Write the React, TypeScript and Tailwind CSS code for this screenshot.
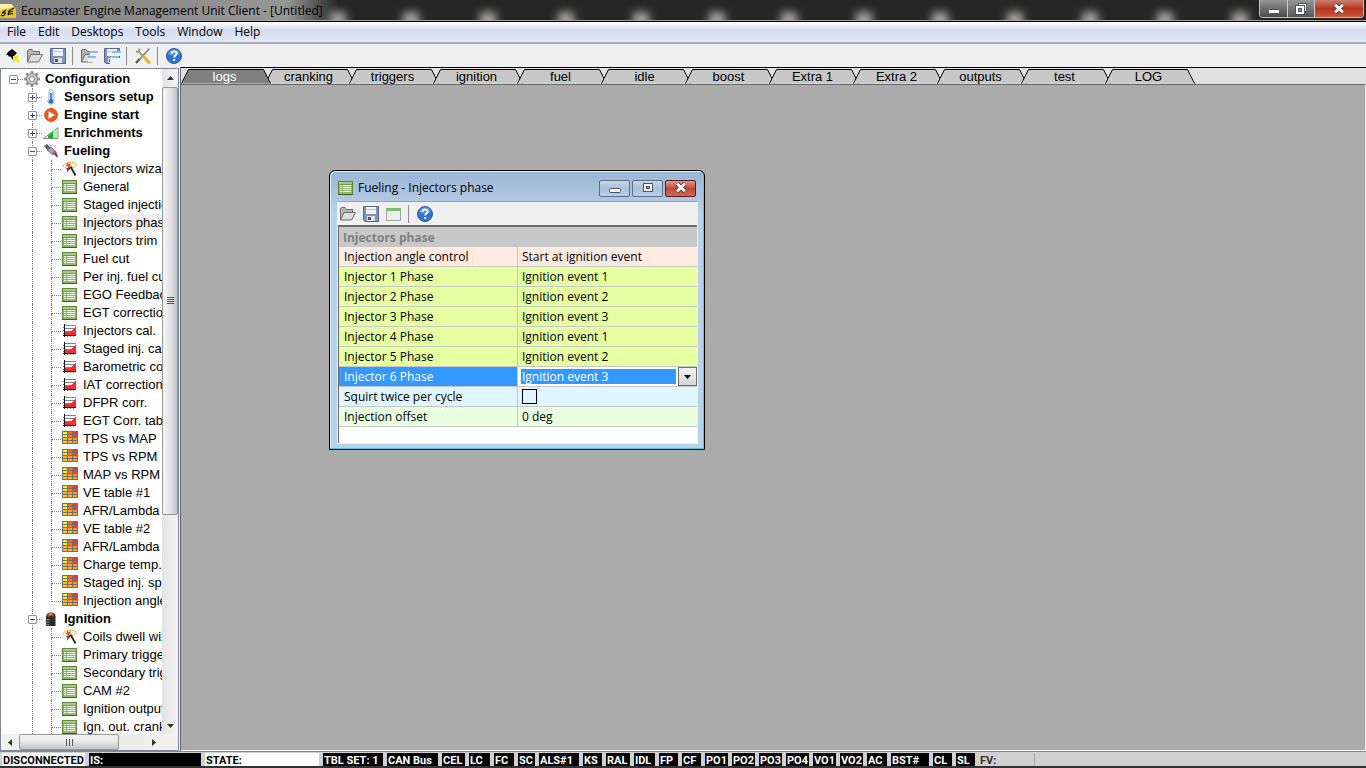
import { useState } from "react";
import type { ReactNode } from "react";
import clsx from "clsx";

type IconName = "sheet" | "wand" | "curve" | "map";

interface TreeItem {
    label: string;
    level: 0 | 1 | 2;
    icon: ReactNode;
    expanded?: boolean;
    last?: boolean;
    selected?: boolean;
}

/* ---------- Icons ---------- */

const SheetIcon = () => (
    <svg width="16" height="16" viewBox="0 0 16 16" shapeRendering="crispEdges">
        <rect x="0.5" y="1.5" width="14" height="13" fill="#8fb868" stroke="#5d8838" />
        <rect x="1" y="2" width="13" height="2" fill="#a9c98a" />
        <rect x="1" y="4" width="13" height="1" fill="#6f9a48" />
        {[5, 7, 9, 11].map((y) => (
            <g key={y}>
                <rect x="2" y={y} width="2" height="1" fill="#f4faee" />
                <rect x="5" y={y} width="8" height="1" fill="#f4faee" />
            </g>
        ))}
        <rect x="0" y="14" width="15" height="1" fill="#3c6413" />
    </svg>
);

const WandIcon = () => (
    <svg width="16" height="16" viewBox="0 0 16 16" fill="none">
        <path d="M1 5C2 2 9 0 13 2.200C16 4.500 13 6.500 9 6.800" stroke="#f0a830" />
        <path d="M1 5C1.500 6.500 3.500 7 5 7" stroke="#f7ca60" />
        <path d="M8.500 5.500L13.500 14.500" stroke="#2c2424" strokeWidth="1.800" />
        <path d="M7.500 6L9 7 6.500 9.500 4.500 12 5.500 8.500 3.500 8z" fill="#4a3028" />
        <path d="M5 1l1.500 2L9 2 8 4.200 10 6 7.500 5.800 6.500 8 5.500 5.500 3 5l2-1.500z" fill="#d85a34" />
    </svg>
);

const CurveIcon = () => (
    <svg width="16" height="16" viewBox="0 0 16 16" shapeRendering="crispEdges">
        <rect x="2" y="2" width="12" height="1" fill="#7487a0" />
        <rect x="2" y="5" width="12" height="1" fill="#7487a0" />
        <rect x="2" y="8" width="9" height="1" fill="#7487a0" />
        <path d="M3 12V9h3l3-1 2-2 2-2 1-1v9z" fill="#f92c2c" />
        <rect x="2" y="1" width="1" height="13" fill="#111" />
        <rect x="1" y="12" width="13" height="1" fill="#111" />
        {[5, 8, 11].map((x) => <rect key={x} x={x} y="13" width="1" height="1" fill="#777" />)}
        {[4, 7, 10].map((y) => <rect key={y} x="1" y={y} width="1" height="1" fill="#777" />)}
    </svg>
);

const mapColors = [
    ["#dcff28", "#ff6420", "#ff2c2c"],
    ["#e8f028", "#ff7820", "#ff3c2c"],
    ["#ffb020", "#ffa030", "#ff9030"],
    ["#ffc020", "#ffb020", "#ffa020"],
];

const MapIcon = () => (
    <svg width="16" height="16" viewBox="0 0 16 16" shapeRendering="crispEdges">
        <rect y="0" width="16" height="13" fill="#76706a" />
        {mapColors.map((row, y) =>
            row.map((fill, x) => <rect key={`${x}-${y}`} x={1 + x * 5} y={1 + y * 3} width="4" height="2" fill={fill} />)
        )}
    </svg>
);

const GearIcon = () => (
    <svg width="16" height="16" viewBox="0 0 16 16">
        {[0, 45, 90, 135].map((a) => (
            <rect key={a} x="6.500" y="0" width="3" height="16" rx="1" fill="#8c8c8c" transform={`rotate(${a} 8 8)`} />
        ))}
        <circle cx="8" cy="8" r="5.500" fill="#c4c4c4" stroke="#8e8e8e" />
        <circle cx="8" cy="8" r="2.600" fill="#fff" stroke="#8e8e8e" />
    </svg>
);

const ThermometerIcon = () => (
    <svg width="16" height="16" viewBox="0 0 16 16">
        <path d="M6 2.500a2 2 0 0 1 4 0V10a3 3 0 1 1-4 0z" fill="#e4f1fa" stroke="#8fb4d0" />
        <path d="M8 4v8" stroke="#2778b8" strokeWidth="1.600" />
        <circle cx="8" cy="12.500" r="2.200" fill="#2778b8" />
        <path d="M10.500 4h1.500M10.500 6h1.500M10.500 8h1.500" stroke="#a9bccb" />
    </svg>
);

const StartIcon = () => (
    <svg width="16" height="16" viewBox="0 0 16 16">
        <circle cx="8" cy="8" r="6.400" fill="#ee5a1c" stroke="#d9460e" />
        <path d="M5.500 4.200L12 8l-6.500 3.800z" fill="#fff" />
    </svg>
);

const RampIcon = () => (
    <svg width="16" height="16" viewBox="0 0 16 16">
        <path d="M.5 13.500L15 2.500v11z" fill="#f2faf0" stroke="#74907a" />
        <path d="M5 10.500l5.500-4.200V13H5z" fill="#19b32c" />
        <path d="M10.500 6.300L14.500 3.500V13h-4z" fill="#b4e8b4" />
    </svg>
);

const InjectorIcon = () => (
    <svg width="16" height="16" viewBox="0 0 16 16">
        <path d="M1 3l3-2 4 4-3 3z" fill="#5b606e" />
        <path d="M4 7l4-3 5 5-3 3z" fill="#a8a4b4" stroke="#62606e" strokeWidth=".8" />
        <path d="M9 10l3-3 2 3-2 2z" fill="#c85c50" />
        <path d="M11 11l2-1.500 2 4-1 1z" fill="#3f4658" />
        <path d="M6 1.500l3 .5-1 2z" fill="#8fa0c4" />
    </svg>
);

const CoilIcon = () => (
    <svg width="16" height="16" viewBox="0 0 16 16">
        <path d="M3 15V7c0-4 2-5.500 5-5.500s4.500 1.500 4.500 4V15z" fill="#2c2c2c" />
        <path d="M4 5c1-4 6-4 7-1l-1 2c-1-2-3-2-4 0z" fill="#b9543c" />
        <circle cx="7.500" cy="3" r="1.500" fill="#f08060" />
        <path d="M2.500 9l4-.5M2.500 11.500l4-.5M2.500 14l4-.5" stroke="#8c8c8c" />
    </svg>
);

const FolderIcon = ({ stacked }: { stacked?: boolean }) => (
    <svg width="18" height="18" viewBox="0 0 18 18">
        <path d="M1.500 14.500v-11l1-1H6l1.500 2h6v3" fill="#b5b5b5" stroke="#6c6c6c" />
        <path d="M1.500 15L5 7.500h11.500L12.500 15z" fill="#dcdcdc" stroke="#6c6c6c" strokeLinejoin="round" />
        {stacked && (
            <>
                <rect x="10" y="4" width="8" height="5" fill="#eef6fb" />
                <path d="M10 5h8M8 10h8" stroke="#8fbcd6" strokeWidth="2" />
                <rect x="8" y="11" width="8" height="4" fill="#e6f1f8" />
            </>
        )}
    </svg>
);

const SaveIcon = ({ stacked }: { stacked?: boolean }) => (
    <svg width="18" height="18" viewBox="0 0 18 18">
        <path d="M1.500 1.500h15v15H3l-1.500-1.500z" fill="#8093b4" stroke="#586a8a" />
        <rect x="4" y="2" width="10" height="7" fill="#eef0f5" />
        <path d="M4 4.500h10" stroke="#c4cbd8" />
        <rect x="5" y="11" width="8" height="5" fill="#dde1e8" />
        <rect x="6" y="12" width="3" height="3" fill="#4c5a74" />
        {stacked && (
            <>
                <rect x="9" y="4" width="9" height="5" fill="#eef6fb" />
                <path d="M9 5h9M7 10h9" stroke="#8fbcd6" strokeWidth="2" />
                <rect x="7" y="11" width="11" height="7" fill="#eef3f6" />
            </>
        )}
    </svg>
);

const PlugIcon = () => (
    <svg width="16" height="16" viewBox="0 0 16 16">
        <path d="M2 7l2-3 4-3 5 4-3 3-1 4-3-4-1 1-1-2z" fill="#080808" />
        <path d="M9 8h6l-2 2 3 4-1 1-4-3-2 2z" fill="#f6e600" />
    </svg>
);

const ToolsIcon = () => (
    <svg width="18" height="18" viewBox="0 0 18 18" fill="none">
        <path d="M15.500 1.500L5 13" stroke="#8b8b8b" strokeWidth="1.800" />
        <path d="M5.500 12L2 16" stroke="#555" strokeWidth="2" />
        <path d="M4 4l6 6" stroke="#9c9c9c" strokeWidth="2" />
        <path d="M2 4.500l3 .5.500-3.500" stroke="#9c9c9c" strokeWidth="1.800" />
        <path d="M10 10l5 5.500" stroke="#e9b41c" strokeWidth="3" strokeLinecap="round" />
    </svg>
);

const HelpIcon = () => (
    <svg width="18" height="18" viewBox="0 0 18 18">
        <circle cx="9" cy="9" r="7.500" fill="#2f72cf" stroke="#2a5aa6" />
        <path d="M3 7a6.200 6.200 0 0 1 12 0c-3 2-9 2-12 0z" fill="#7aa9e6" opacity=".6" />
        <path d="M6.500 7c0-3.500 5.200-3.300 5.200-.5 0 2-2.500 2-2.500 4" fill="none" stroke="#fff" strokeWidth="1.900" />
        <rect x="8.200" y="12" width="2" height="2" fill="#fff" />
    </svg>
);

const PanelIcon = () => (
    <svg width="18" height="18" viewBox="0 0 18 18">
        <rect x="1.500" y="3.500" width="14" height="12" fill="#ececec" stroke="#a3a3a3" />
        <rect x="1" y="3" width="15" height="3" fill="#78bf66" />
    </svg>
);

const AppIcon = () => (
    <svg width="16" height="16" viewBox="0 0 16 16">
        <path d="M0 1h11l5 5v9H0z" fill="#e8c52e" />
        <path d="M0 1h11l3 3-14 3z" fill="#f8eda8" />
        <path d="M2 10l4-3M2 10c2 0 4-1 3 1s-3 2-4 1M8 12l1-4 5-3M8 9l5-.5M8 12c2-2 3-2 5-1" fill="none" stroke="#181400" strokeWidth="1.200" />
    </svg>
);

const Glyph = ({ kind }: { kind: "min" | "max" | "restore" | "close" }) => (
    <svg width="14" height="12" viewBox="0 0 14 12">
        {kind === "min" && <rect x="1.500" y="6.500" width="11" height="4" rx="1" fill="#fff" stroke="#4b5268" />}
        {kind === "max" && (
            <>
                <rect x="2.500" y="1.500" width="9" height="8" fill="#fff" stroke="#4b5268" />
                <rect x="5.500" y="4.500" width="3" height="2" fill="#8da3bf" stroke="#4b5268" />
            </>
        )}
        {kind === "restore" && (
            <>
                <rect x="4.500" y=".5" width="8" height="8" fill="#fff" stroke="#4b5268" />
                <rect x="1.500" y="2.500" width="9" height="9" fill="#fff" stroke="#4b5268" />
                <rect x="4.500" y="5.500" width="3" height="3" fill="#999" stroke="#4b5268" />
            </>
        )}
        {kind === "close" && (
            <>
                <path d="M3 1.500l8 8M11 1.500l-8 8" stroke="#59414a" strokeWidth="4.600" />
                <path d="M3.200 1.700l7.600 7.600M10.800 1.700L3.200 9.300" stroke="#fff" strokeWidth="2.800" />
            </>
        )}
    </svg>
);

/* ---------- Data ---------- */

const icons: Record<IconName, ReactNode> = {
    sheet: <SheetIcon />,
    wand: <WandIcon />,
    curve: <CurveIcon />,
    map: <MapIcon />,
};

const leaf = (label: string, icon: IconName, extra: Partial<TreeItem> = {}): TreeItem => ({
    label,
    level: 2,
    icon: icons[icon],
    ...extra,
});

const treeItems: TreeItem[] = [
    { label: "Configuration", level: 0, icon: <GearIcon />, expanded: true },
    { label: "Sensors setup", level: 1, icon: <ThermometerIcon />, expanded: false },
    { label: "Engine start", level: 1, icon: <StartIcon />, expanded: false },
    { label: "Enrichments", level: 1, icon: <RampIcon />, expanded: false },
    { label: "Fueling", level: 1, icon: <InjectorIcon />, expanded: true },
    leaf("Injectors wizard", "wand"),
    leaf("General", "sheet"),
    leaf("Staged injection", "sheet"),
    leaf("Injectors phase", "sheet", { selected: true }),
    leaf("Injectors trim", "sheet"),
    leaf("Fuel cut", "sheet"),
    leaf("Per inj. fuel cut", "sheet"),
    leaf("EGO Feedback", "sheet"),
    leaf("EGT correction", "sheet"),
    leaf("Injectors cal.", "curve"),
    leaf("Staged inj. cal.", "curve"),
    leaf("Barometric corr.", "curve"),
    leaf("IAT correction", "curve"),
    leaf("DFPR corr.", "curve"),
    leaf("EGT Corr. table", "curve"),
    leaf("TPS vs MAP", "map"),
    leaf("TPS vs RPM", "map"),
    leaf("MAP vs RPM", "map"),
    leaf("VE table #1", "map"),
    leaf("AFR/Lambda #1", "map"),
    leaf("VE table #2", "map"),
    leaf("AFR/Lambda #2", "map"),
    leaf("Charge temp.", "map"),
    leaf("Staged inj. split", "map"),
    leaf("Injection angle", "map", { last: true }),
    { label: "Ignition", level: 1, icon: <CoilIcon />, expanded: true },
    leaf("Coils dwell wizard", "wand"),
    leaf("Primary trigger", "sheet"),
    leaf("Secondary trigger", "sheet"),
    leaf("CAM #2", "sheet"),
    leaf("Ignition outputs", "sheet"),
    leaf("Ign. out. cranking", "sheet"),
];

const tabs = ["logs", "cranking", "triggers", "ignition", "fuel", "idle", "boost", "Extra 1", "Extra 2", "outputs", "test", "LOG"];

const params = [
    { name: "Injection angle control", value: "Start at ignition event", bg: "bg-[#ffeae0]" },
    { name: "Injector 1 Phase", value: "Ignition event 1", bg: "bg-[#e6ffa0]" },
    { name: "Injector 2 Phase", value: "Ignition event 2", bg: "bg-[#e6ffa0]" },
    { name: "Injector 3 Phase", value: "Ignition event 3", bg: "bg-[#e6ffa0]" },
    { name: "Injector 4 Phase", value: "Ignition event 1", bg: "bg-[#e6ffa0]" },
    { name: "Injector 5 Phase", value: "Ignition event 2", bg: "bg-[#e6ffa0]" },
    { name: "Injector 6 Phase", kind: "select", bg: "bg-white" },
    { name: "Squirt twice per cycle", kind: "check", bg: "bg-[#e0f6ff]" },
    { name: "Injection offset", value: "0 deg", bg: "bg-[#e8ffe0]" },
];

const statusCells = [
    { label: "DISCONNECTED", cls: "w-[83px] bg-white text-black" },
    { label: "IS:", cls: "w-[112px] bg-black text-white" },
    { label: "STATE:", cls: "w-[114px] bg-white text-black" },
    { label: "TBL SET: 1", cls: "w-[60px] bg-black text-white" },
    { label: "CAN Bus", cls: "w-[51px] bg-black text-white" },
    { label: "CEL", cls: "w-[23px] bg-black text-white" },
    { label: "LC", cls: "w-[21px] bg-black text-white" },
    { label: "FC", cls: "w-[20px] bg-black text-white" },
    { label: "SC", cls: "w-[17px] bg-black text-white" },
    { label: "ALS#1", cls: "w-[40px] bg-black text-white" },
    { label: "KS", cls: "w-[19px] bg-black text-white" },
    { label: "RAL", cls: "w-[24px] bg-black text-white" },
    { label: "IDL", cls: "w-[21px] bg-black text-white" },
    { label: "FP", cls: "w-[19px] bg-black text-white" },
    { label: "CF", cls: "w-[19px] bg-black text-white" },
    { label: "PO1", cls: "w-[23px] bg-black text-white" },
    { label: "PO2", cls: "w-[23px] bg-black text-white" },
    { label: "PO3", cls: "w-[23px] bg-black text-white" },
    { label: "PO4", cls: "w-[23px] bg-black text-white" },
    { label: "VO1", cls: "w-[23px] bg-black text-white" },
    { label: "VO2", cls: "w-[23px] bg-black text-white" },
    { label: "AC", cls: "w-[20px] bg-black text-white" },
    { label: "BST#", cls: "w-[38px] bg-black text-white" },
    { label: "CL", cls: "w-[19px] bg-black text-white" },
    { label: "SL", cls: "w-[19px] bg-black text-white" },
    { label: "FV:", cls: "w-[56px] border-r border-[#a8a8a8] text-[#333]" },
];

const glows = [338, 411, 488, 566, 641, 717, 789, 864, 940, 1015, 1090, 1165, 1240];

/* ---------- Window chrome ---------- */

function TitleBar() {
    return (
        <header className="relative flex h-[22px] shrink-0 justify-between overflow-hidden border-b border-black bg-[#262626]">
            {/* blurred desktop showing through the glass */}
            <svg className="absolute inset-0 h-full w-full" aria-hidden="true">
                <defs>
                    <filter id="soft" x="-100%" y="-100%" width="300%" height="300%">
                        <feGaussianBlur stdDeviation="4" />
                    </filter>
                    <linearGradient id="haze">
                        <stop offset="0" stopColor="#828282" />
                        <stop offset=".85" stopColor="#969696" />
                        <stop offset="1" stopColor="#969696" stopOpacity="0" />
                    </linearGradient>
                </defs>
                <rect width="100%" height="100%" fill="#262626" />
                {glows.map((x) => <rect key={x} x={x - 8} y="12" width="16" height="20" fill="#a8a4a2" filter="url(#soft)" />)}
                <rect width="338" height="22" fill="url(#haze)" />
                <rect y="20" width="100%" height="1" fill="#a4a0a0" />
            </svg>
            <div className="relative flex items-center gap-[5px]">
                <AppIcon />
                <h1 className="text-[12px] leading-5 text-black">Ecumaster Engine Management Unit Client - [Untitled]</h1>
            </div>
            <div className="relative mr-[2px] flex h-[18px] overflow-hidden rounded-b-[4px] border border-t-0 border-[#c4c0c0] shadow-[0_0_0_1px_#222]">
                <button aria-label="Minimize" className="flex w-7 items-center justify-center border-r border-[#ccc] bg-gradient-to-b from-[#969696] to-[#4a4a4a]">
                    <Glyph kind="min" />
                </button>
                <button aria-label="Restore" className="flex w-[27px] items-center justify-center border-r border-[#ccc] bg-gradient-to-b from-[#969696] to-[#565656]">
                    <Glyph kind="restore" />
                </button>
                <button aria-label="Close" className="flex w-12 items-center justify-center bg-gradient-to-b from-[#c97d70] via-[#b8341c] to-[#d0543a]">
                    <Glyph kind="close" />
                </button>
            </div>
        </header>
    );
}

const Separator = () => <span className="mr-1 ml-[3px] h-[18px] w-px bg-[#8c8c8c]" />;

const ToolButton = ({ label, children }: { label: string; children: ReactNode }) => (
    <button aria-label={label} className="flex w-[23px] items-center justify-center">
        {children}
    </button>
);

function Toolbar() {
    return (
        <div className="flex h-[23px] shrink-0 items-center bg-[#f0f0f0]">
            <ToolButton label="Connect"><PlugIcon /></ToolButton>
            <ToolButton label="Open"><FolderIcon /></ToolButton>
            <ToolButton label="Save"><SaveIcon /></ToolButton>
            <Separator />
            <ToolButton label="Open desktops"><FolderIcon stacked /></ToolButton>
            <ToolButton label="Save desktops"><SaveIcon stacked /></ToolButton>
            <Separator />
            <ToolButton label="Options"><ToolsIcon /></ToolButton>
            <Separator />
            <ToolButton label="Help"><HelpIcon /></ToolButton>
        </div>
    );
}

/* ---------- Project tree ---------- */

function TreeRow({ item }: { item: TreeItem }) {
    const { level, label, icon, expanded, last, selected } = item;
    return (
        <li className="flex h-[18px] w-max items-center" role="treeitem" aria-level={level + 1} aria-selected={!!selected}>
            {level > 0 && level < 2 && <span className="w-[19px]" />}
            {level > 1 && (
                <>
                    <span className="w-[19px]" />
                    <span className="flex h-full w-[19px] pl-[9px]">
                        <span className="border-l border-dotted border-[#808080]" />
                    </span>
                </>
            )}
            <span className="relative flex h-full w-[19px] flex-col pl-[9px]">
                <span className={clsx("h-[10px] border-b border-dotted border-[#808080]", level > 0 && "border-l")} />
                <span className={clsx("h-2 border-dotted border-[#808080]", level > 0 && !last && "border-l")} />
                {expanded !== undefined && (
                    <button
                        aria-label={`${expanded ? "Collapse" : "Expand"} ${label}`}
                        className="absolute top-[5px] left-[5px] h-[9px] w-[9px] rounded-[1px] border border-[#919191] bg-white"
                    >
                        <svg width="7" height="7" className="block" shapeRendering="crispEdges">
                            <rect x="1" y="3" width="5" height="1" fill="#2f4d94" />
                            {!expanded && <rect x="3" y="1" width="1" height="5" fill="#2f4d94" />}
                        </svg>
                    </button>
                )}
            </span>
            <span className="flex w-[22px] pl-px">{icon}</span>
            <span className={clsx("text-[13px] leading-[18px]", level < 2 && "font-bold", selected && "bg-[#f0f0f0]")}>{label}</span>
        </li>
    );
}

const Arrow = ({ d }: { d: string }) => (
    <svg width="7" height="7" viewBox="0 0 7 7"><path d={d} fill="#333" /></svg>
);

function Sidebar() {
    return (
        <aside className="flex w-[181px] shrink-0 flex-col border-r border-[#696969] bg-[#f0f0f0] pt-px pr-px">
            <div className="flex min-h-0 flex-1 flex-col border border-[#828790]">
                <div className="flex min-h-0 flex-1">
                    <ul role="tree" className="min-w-0 flex-1 overflow-hidden bg-white pt-px pl-[3px] font-['Liberation_Sans',Arial,sans-serif]">
                        {treeItems.map((item, i) => <TreeRow key={i} item={item} />)}
                    </ul>
                    <div className="flex w-4 flex-col bg-gradient-to-r from-[#e3e3e3] to-[#f4f4f4]">
                        <button aria-label="Scroll up" className="flex h-[18px] items-center justify-center">
                            <Arrow d="M0 5l3.500-4L7 5z" />
                        </button>
                        <div className="min-h-0 flex-1">
                            <div className="flex h-[68%] flex-col items-center justify-center gap-px rounded-[2px] border border-[#979797] bg-gradient-to-r from-[#f5f5f5] via-[#e6e6e8] to-[#c2c3c7]">
                                {[0, 1, 2, 3].map((n) => <span key={n} className="h-px w-[7px] bg-[#555]" />)}
                            </div>
                        </div>
                        <button aria-label="Scroll down" className="flex h-[18px] items-center justify-center">
                            <Arrow d="M0 2l3.500 4L7 2z" />
                        </button>
                    </div>
                </div>
                <div className="flex h-4 pr-4">
                    <button aria-label="Scroll left" className="flex w-[18px] items-center justify-center">
                        <Arrow d="M5 0L1 3.500 5 7z" />
                    </button>
                    <div className="flex-1 bg-[#ececec]">
                        <div className="flex h-full w-4/5 items-center justify-center gap-[2px] rounded-[2px] border border-[#979797] bg-gradient-to-b from-[#f5f5f5] via-[#e6e6e8] to-[#c2c3c7]">
                            {[0, 1, 2].map((n) => <span key={n} className="h-[7px] w-px bg-[#555]" />)}
                        </div>
                    </div>
                    <button aria-label="Scroll right" className="flex w-[18px] items-center justify-center">
                        <Arrow d="M2 0l4 3.500L2 7z" />
                    </button>
                </div>
            </div>
        </aside>
    );
}

/* ---------- Desktop ---------- */

function DesktopTabs() {
    const [active, setActive] = useState(0);
    return (
        <div role="tablist" className="flex h-4 shrink-0 bg-[#e0e0e0] pt-px font-['Liberation_Sans',Arial,sans-serif] text-[13px]">
            {tabs.map((tab, i) => (
                <button
                    key={tab}
                    role="tab"
                    aria-selected={active === i}
                    onClick={() => setActive(i)}
                    className={clsx("relative h-[15px] w-[84px] pl-[3px] leading-[15px]", active === i ? "z-10 text-white" : "text-black")}
                >
                    <svg className="absolute inset-0 overflow-visible" width="90" height="15" aria-hidden="true">
                        <path d="M.5 14.500L7.500.5h75l7 14" fill={active === i ? "#808080" : "#c8c8c8"} stroke="#000" />
                    </svg>
                    <span className="relative">{tab}</span>
                </button>
            ))}
        </div>
    );
}

function PhaseWindow() {
    const [phase, setPhase] = useState("Ignition event 3");
    const [twice, setTwice] = useState(false);

    return (
        <section className="absolute top-[85px] left-[148px] w-[376px] rounded-t-[6px] border border-black bg-gradient-to-b from-[#9ab4d2] via-[#bad1ea] via-15% to-[#b9d1ea] pr-[6px] pb-[5px] pl-[7px] shadow-[inset_-1px_-1px_0_#45d0e8,inset_1px_1px_0_#dff0fa]">
            <div className="flex h-[30px] items-center justify-between pt-1 pr-[2px] pl-px">
                <h2 className="flex items-center gap-1 text-[12px] leading-4">
                    <SheetIcon />
                    Fueling - Injectors phase
                </h2>
                <div className="flex gap-[2px]">
                    <button aria-label="Minimize" className="flex h-[17px] w-[31px] items-center justify-center rounded-[2px] border border-[#586f8e] bg-gradient-to-b from-[#c5d6e8] via-[#a9c1dc] to-[#b9cfe6]">
                        <Glyph kind="min" />
                    </button>
                    <button aria-label="Maximize" className="flex h-[17px] w-[31px] items-center justify-center rounded-[2px] border border-[#586f8e] bg-gradient-to-b from-[#c5d6e8] via-[#a9c1dc] to-[#b9cfe6]">
                        <Glyph kind="max" />
                    </button>
                    <button aria-label="Close" className="flex h-[17px] w-[31px] items-center justify-center rounded-[2px] border border-[#5c1c18] bg-gradient-to-b from-[#dc9a8c] via-[#c04a36] to-[#cf6a50]">
                        <Glyph kind="close" />
                    </button>
                </div>
            </div>
            <div className="border border-[#f0f0f0] border-t-[#8fa3b9] bg-[#f0f0f0]">
                <div className="-ml-[2px] flex h-[23px] items-center">
                    <ToolButton label="Open"><FolderIcon /></ToolButton>
                    <ToolButton label="Save"><SaveIcon /></ToolButton>
                    <ToolButton label="Restore defaults"><PanelIcon /></ToolButton>
                    <Separator />
                    <ToolButton label="Help"><HelpIcon /></ToolButton>
                </div>
                <div className="border-t-2 border-l border-[#696969] bg-white pb-4">
                    <table className="w-full table-fixed border-separate border-spacing-0 text-[12px]">
                        <thead>
                            <tr className="bg-[#c8c8c8] text-left text-[#808080]">
                                <th colSpan={2} className="h-5 p-0 pl-1 leading-[19px] font-bold">Injectors phase</th>
                            </tr>
                        </thead>
                        <tbody>
                            {params.map(({ name, value, kind, bg }) => (
                                <tr key={name} className={bg}>
                                    <td className={clsx("h-5 w-1/2 border-r border-b border-[#c8c8c8] p-0 pl-[5px] leading-[19px]", kind === "select" && "bg-[#3399ff] text-white")}>
                                        {kind ? <label htmlFor={kind}>{name}</label> : name}
                                    </td>
                                    <td className={clsx("h-5 border-b border-[#c8c8c8] p-0 leading-[19px]", kind === "select" ? "pl-[3px]" : "pl-1")}>
                                        {kind === "select" && (
                                            <div className="flex h-[19px] items-center gap-[2px]">
                                                <select
                                                    id="select"
                                                    value={phase}
                                                    onChange={(e) => setPhase(e.target.value)}
                                                    className="h-[15px] min-w-0 flex-1 appearance-none bg-[#3399ff] pl-px leading-[15px] text-white outline-none"
                                                >
                                                    <option>Ignition event 1</option>
                                                    <option>Ignition event 2</option>
                                                    <option>Ignition event 3</option>
                                                </select>
                                                <button aria-label="Show options" className="flex h-[19px] w-[19px] items-center justify-center border border-[#707070] bg-gradient-to-b from-[#f4f4f4] to-[#d4d4d4]">
                                                    <svg width="7" height="4"><path d="M0 0h7L3.500 4z" /></svg>
                                                </button>
                                            </div>
                                        )}
                                        {kind === "check" && (
                                            <input
                                                id="check"
                                                type="checkbox"
                                                checked={twice}
                                                onChange={(e) => setTwice(e.target.checked)}
                                                className="block h-[15px] w-[15px] appearance-none border border-black checked:bg-[#3399ff]"
                                            />
                                        )}
                                        {value}
                                    </td>
                                </tr>
                            ))}
                        </tbody>
                    </table>
                </div>
            </div>
        </section>
    );
}

export default function App() {
    return (
        <div className="flex h-screen flex-col overflow-hidden bg-[#f0f0f0] font-['Open_Sans','Noto_Sans',sans-serif] text-black">
            <TitleBar />
            <nav className="flex h-[22px] shrink-0 items-center gap-3 border-b-2 border-[#a9adb8] bg-gradient-to-b from-white via-[#d5dcee] via-40% to-[#e2e8f6] pl-[7px] text-[12px]">
                {["File", "Edit", "Desktops", "Tools", "Window", "Help"].map((m) => (
                    <button key={m} className="leading-5">{m}</button>
                ))}
            </nav>
            <Toolbar />
            <div className="flex min-h-0 flex-1">
                <Sidebar />
                <main className="flex min-w-0 flex-1 flex-col border-t border-black">
                    <DesktopTabs />
                    <div className="relative min-h-0 flex-1 overflow-hidden border-t border-r border-b border-t-[#696969] border-r-[#e8e8e8] border-b-white bg-[#ababab]">
                        <PhaseWindow />
                    </div>
                </main>
            </div>
            <footer className="flex h-[17px] shrink-0 items-stretch gap-1 border-t border-b-2 border-t-[#888] border-b-[#333] bg-[#d0d0d0] pt-px pl-[2px] font-['Roboto','Liberation_Sans',sans-serif] text-[11px] font-bold">
                {statusCells.map(({ label, cls }) => (
                    <span key={label} className={clsx("shrink-0 pl-px leading-4 whitespace-nowrap", cls)}>{label}</span>
                ))}
            </footer>
        </div>
    );
}
